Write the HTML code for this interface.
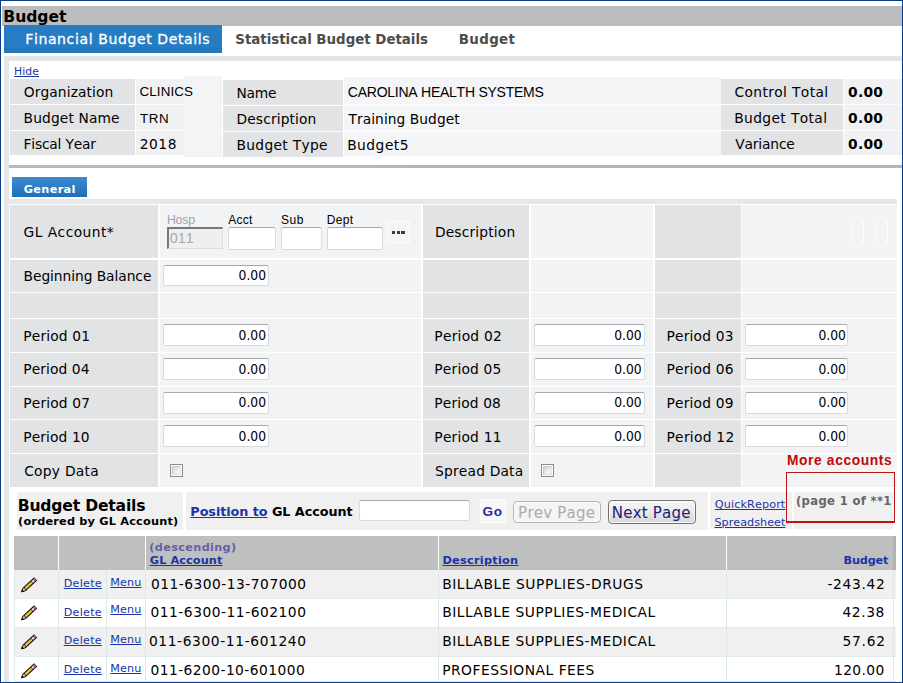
<!DOCTYPE html>
<html><head><meta charset="utf-8"><title>Budget</title>
<style>
html,body{margin:0;padding:0;}
body{width:903px;height:683px;position:relative;overflow:hidden;background:#fff;font-family:"DejaVu Sans","Liberation Sans",sans-serif;font-size:13.8px;color:#000;font-kerning:none;}
.a{position:absolute;}
.t{position:absolute;white-space:nowrap;line-height:1;}
.ar{font-family:"Liberation Sans",sans-serif;}
.b{font-weight:bold;}
a{color:#1a35a8;text-decoration:underline;}
.inp{position:absolute;background:#fff;border:1px solid #d9dadd;border-top-color:#a4a7ab;border-radius:2.5px;box-sizing:border-box;}
.n{font-family:"DejaVu Sans Condensed","DejaVu Sans",sans-serif;font-size:13.7px;}
</style></head><body>
<div class="a" style="left:0px;top:0px;width:903px;height:1px;background:#0b3c84;"></div>
<div class="a" style="left:0px;top:0px;width:1px;height:683px;background:#0b3c84;"></div>
<div class="a" style="left:901.5px;top:0px;width:1.5px;height:683px;background:#0b3c84;"></div>
<div class="a" style="left:0px;top:681.5px;width:903px;height:1.5px;background:#0b3c84;"></div>
<div class="a" style="left:2px;top:6px;width:900px;height:19.6px;background:#bcbdbe;"></div>
<div class="t b" id="t1" style="left:3.3px;top:10px;letter-spacing:-0.05px;font-size:15.6px;color:#000">Budget</div>
<div class="a" style="left:4px;top:25px;width:218px;height:27.6px;background:linear-gradient(#277dc3 0,#277dc3 78%,#2377bd 82%,#2377bd 100%);"></div>
<div class="t " id="t2" style="left:25.26px;top:32px;letter-spacing:0.618px;font-size:14px;color:#fff;-webkit-text-stroke:0.3px #fff">Financial Budget Details</div>
<div class="t b" id="t3" style="left:235.29px;top:33px;letter-spacing:-0.016px;font-size:13.4px;color:#4c4c4c">Statistical Budget Details</div>
<div class="t b" id="t4" style="left:458.67px;top:33px;letter-spacing:0.384px;font-size:13.4px;color:#4c4c4c">Budget</div>
<div class="a" style="left:4px;top:55.8px;width:897.8px;height:5px;background:#e3e5e6;"></div>
<div class="a" style="left:4.2px;top:55.8px;width:4.7px;height:626px;background:#e4e6e8;"></div>
<a class="t " id="t5" style="left:14px;top:67px;letter-spacing:0.1px;font-size:10.8px">Hide</a>
<div class="a" style="left:136px;top:79px;width:48px;height:76px;background:#f0f1f3;"></div>
<div class="a" style="left:183.5px;top:76px;width:38.7px;height:80.5px;background:#f3f4f5;"></div>
<div class="a" style="left:344px;top:77.3px;width:377px;height:78.7px;background:#f4f5f7;"></div>
<div class="a" style="left:843.8px;top:79px;width:58px;height:76px;background:#f1f1f3;"></div>
<div class="a" style="left:10px;top:79px;width:124.7px;height:24.5px;background:#e1e3e5;"></div>
<div class="t " id="t6" style="left:23.7px;top:86px;letter-spacing:0.104px;">Organization</div>
<div class="t ar" id="t7" style="left:139.48px;top:85px;letter-spacing:0.113px;font-size:13.4px">CLINICS</div>
<div class="a" style="left:10px;top:105.2px;width:124.7px;height:24.4px;background:#e1e3e5;"></div>
<div class="t " id="t8" style="left:23.55px;top:112px;letter-spacing:0.127px;">Budget Name</div>
<div class="t ar" id="t9" style="left:139.91px;top:112px;letter-spacing:0.56px;font-size:13.4px">TRN</div>
<div class="a" style="left:135px;top:103.7px;width:48.5px;height:1.5px;background:#fdfdfd;"></div>
<div class="a" style="left:10px;top:131.2px;width:124.7px;height:23.7px;background:#e1e3e5;"></div>
<div class="t " id="t10" style="left:23.55px;top:138px;letter-spacing:-0.186px;">Fiscal Year</div>
<div class="t " id="t11" style="left:139.8px;top:138px;letter-spacing:0.502px;">2018</div>
<div class="a" style="left:135px;top:129.7px;width:48.5px;height:1.5px;background:#fdfdfd;"></div>
<div class="a" style="left:223px;top:80px;width:119.9px;height:24.5px;background:#e1e3e5;"></div>
<div class="t " id="t12" style="left:236.53px;top:87px;letter-spacing:-0.267px;">Name</div>
<div class="t ar" id="t13" style="left:347.85px;top:85px;letter-spacing:-0.251px;font-size:14px">CAROLINA HEALTH SYSTEMS</div>
<div class="a" style="left:223px;top:106.3px;width:119.9px;height:24.5px;background:#e1e3e5;"></div>
<div class="t " id="t14" style="left:236.53px;top:113px;letter-spacing:0.12px;">Description</div>
<div class="t " id="t15" style="left:348.5px;top:113px;letter-spacing:0.05px;">Training Budget</div>
<div class="a" style="left:343px;top:104.3px;width:378px;height:2px;background:#fafafa;"></div>
<div class="a" style="left:223px;top:132.3px;width:119.9px;height:24.5px;background:#e1e3e5;"></div>
<div class="t " id="t16" style="left:236.53px;top:139px;letter-spacing:0.32px;">Budget Type</div>
<div class="t " id="t17" style="left:347.15px;top:139px;letter-spacing:0.504px;">Budget5</div>
<div class="a" style="left:343px;top:130.3px;width:378px;height:2px;background:#fafafa;"></div>
<div class="a" style="left:721px;top:79px;width:121.7px;height:24.5px;background:#e1e3e5;"></div>
<div class="t " id="t18" style="left:734.48px;top:86px;letter-spacing:0.377px;">Control Total</div>
<div class="t b" id="t19" style="left:848.05px;top:86px;letter-spacing:0.275px;color:#000">0.00</div>
<div class="a" style="left:721px;top:105.2px;width:121.7px;height:24.4px;background:#e1e3e5;"></div>
<div class="t " id="t20" style="left:734.26px;top:112px;letter-spacing:0.378px;">Budget Total</div>
<div class="t b" id="t21" style="left:848.05px;top:112px;letter-spacing:0.275px;color:#000">0.00</div>
<div class="a" style="left:843px;top:103.7px;width:58px;height:1.5px;background:#fbfbfb;"></div>
<div class="a" style="left:721px;top:131.2px;width:121.7px;height:23.7px;background:#e1e3e5;"></div>
<div class="t " id="t22" style="left:735.2px;top:138px;letter-spacing:-0.149px;">Variance</div>
<div class="t b" id="t23" style="left:848.05px;top:138px;letter-spacing:0.275px;color:#000">0.00</div>
<div class="a" style="left:843px;top:129.7px;width:58px;height:1.5px;background:#fbfbfb;"></div>
<div class="a" style="left:9px;top:165px;width:893px;height:2.9px;background:linear-gradient(90deg,#b3bdbd,#b6b6b6 60%);"></div>
<div class="a" style="left:12.2px;top:177.3px;width:74.8px;height:19.3px;background:linear-gradient(#3a8bd0,#1f70b9);"></div>
<div class="t b" id="t24" style="left:23.65px;top:184px;letter-spacing:0.347px;font-size:11.3px;color:#fff">General</div>
<div class="a" style="left:9px;top:198.8px;width:888px;height:5.6px;background:#e5e7e8;"></div>
<div class="a" style="left:10px;top:204.7px;width:147.7px;height:53.2px;background:#e1e3e5;"></div>
<div class="a" style="left:159.6px;top:204.7px;width:261.2px;height:53.2px;background:#f2f3f5;"></div>
<div class="a" style="left:422.8px;top:204.7px;width:106.1px;height:53.2px;background:#e1e3e5;"></div>
<div class="a" style="left:530.7px;top:204.7px;width:122.4px;height:53.2px;background:#f2f3f5;"></div>
<div class="a" style="left:654.7px;top:204.7px;width:86.4px;height:53.2px;background:#e1e3e5;"></div>
<div class="a" style="left:742px;top:204.7px;width:155px;height:53.2px;background:#f2f3f5;"></div>
<div class="a" style="left:10px;top:259.8px;width:147.7px;height:31.8px;background:#e1e3e5;"></div>
<div class="a" style="left:159.6px;top:259.8px;width:261.2px;height:31.8px;background:#f2f3f5;"></div>
<div class="a" style="left:422.8px;top:259.8px;width:106.1px;height:31.8px;background:#e1e3e5;"></div>
<div class="a" style="left:530.7px;top:259.8px;width:122.4px;height:31.8px;background:#f2f3f5;"></div>
<div class="a" style="left:654.7px;top:259.8px;width:86.4px;height:31.8px;background:#e1e3e5;"></div>
<div class="a" style="left:742px;top:259.8px;width:155px;height:31.8px;background:#f2f3f5;"></div>
<div class="a" style="left:10px;top:293px;width:147.7px;height:24.8px;background:#e1e3e5;"></div>
<div class="a" style="left:159.6px;top:293px;width:261.2px;height:24.8px;background:#f2f3f5;"></div>
<div class="a" style="left:422.8px;top:293px;width:106.1px;height:24.8px;background:#e1e3e5;"></div>
<div class="a" style="left:530.7px;top:293px;width:122.4px;height:24.8px;background:#f2f3f5;"></div>
<div class="a" style="left:654.7px;top:293px;width:86.4px;height:24.8px;background:#e1e3e5;"></div>
<div class="a" style="left:742px;top:293px;width:155px;height:24.8px;background:#f2f3f5;"></div>
<div class="a" style="left:10px;top:319.2px;width:147.7px;height:32.4px;background:#e1e3e5;"></div>
<div class="a" style="left:159.6px;top:319.2px;width:261.2px;height:32.4px;background:#f2f3f5;"></div>
<div class="a" style="left:422.8px;top:319.2px;width:106.1px;height:32.4px;background:#e1e3e5;"></div>
<div class="a" style="left:530.7px;top:319.2px;width:122.4px;height:32.4px;background:#f2f3f5;"></div>
<div class="a" style="left:654.7px;top:319.2px;width:86.4px;height:32.4px;background:#e1e3e5;"></div>
<div class="a" style="left:742px;top:319.2px;width:155px;height:32.4px;background:#f2f3f5;"></div>
<div class="a" style="left:10px;top:353px;width:147.7px;height:32.6px;background:#e1e3e5;"></div>
<div class="a" style="left:159.6px;top:353px;width:261.2px;height:32.6px;background:#f2f3f5;"></div>
<div class="a" style="left:422.8px;top:353px;width:106.1px;height:32.6px;background:#e1e3e5;"></div>
<div class="a" style="left:530.7px;top:353px;width:122.4px;height:32.6px;background:#f2f3f5;"></div>
<div class="a" style="left:654.7px;top:353px;width:86.4px;height:32.6px;background:#e1e3e5;"></div>
<div class="a" style="left:742px;top:353px;width:155px;height:32.6px;background:#f2f3f5;"></div>
<div class="a" style="left:10px;top:387px;width:147.7px;height:31.8px;background:#e1e3e5;"></div>
<div class="a" style="left:159.6px;top:387px;width:261.2px;height:31.8px;background:#f2f3f5;"></div>
<div class="a" style="left:422.8px;top:387px;width:106.1px;height:31.8px;background:#e1e3e5;"></div>
<div class="a" style="left:530.7px;top:387px;width:122.4px;height:31.8px;background:#f2f3f5;"></div>
<div class="a" style="left:654.7px;top:387px;width:86.4px;height:31.8px;background:#e1e3e5;"></div>
<div class="a" style="left:742px;top:387px;width:155px;height:31.8px;background:#f2f3f5;"></div>
<div class="a" style="left:10px;top:420.1px;width:147.7px;height:32.7px;background:#e1e3e5;"></div>
<div class="a" style="left:159.6px;top:420.1px;width:261.2px;height:32.7px;background:#f2f3f5;"></div>
<div class="a" style="left:422.8px;top:420.1px;width:106.1px;height:32.7px;background:#e1e3e5;"></div>
<div class="a" style="left:530.7px;top:420.1px;width:122.4px;height:32.7px;background:#f2f3f5;"></div>
<div class="a" style="left:654.7px;top:420.1px;width:86.4px;height:32.7px;background:#e1e3e5;"></div>
<div class="a" style="left:742px;top:420.1px;width:155px;height:32.7px;background:#f2f3f5;"></div>
<div class="a" style="left:10px;top:454px;width:147.7px;height:32.6px;background:#e1e3e5;"></div>
<div class="a" style="left:159.6px;top:454px;width:261.2px;height:32.6px;background:#f2f3f5;"></div>
<div class="a" style="left:422.8px;top:454px;width:106.1px;height:32.6px;background:#e1e3e5;"></div>
<div class="a" style="left:530.7px;top:454px;width:122.4px;height:32.6px;background:#f2f3f5;"></div>
<div class="a" style="left:654.7px;top:454px;width:86.4px;height:32.6px;background:#e1e3e5;"></div>
<div class="a" style="left:742px;top:454px;width:155px;height:32.6px;background:#f2f3f5;"></div>
<div class="t " id="t25" style="left:23.61px;top:226px;letter-spacing:0.45px;">GL Account*</div>
<div class="t " id="t26" style="left:434.88px;top:226px;letter-spacing:0.169px;">Description</div>
<div class="t ar" id="t27" style="left:166.91px;top:214px;letter-spacing:-0.173px;font-size:12.3px;color:#a89fb2">Hosp</div>
<div class="t ar" id="t28" style="left:228.3px;top:214px;letter-spacing:0.216px;font-size:12px;color:#000">Acct</div>
<div class="t ar" id="t29" style="left:281.01px;top:214px;letter-spacing:0.584px;font-size:12px;color:#000">Sub</div>
<div class="t ar" id="t30" style="left:326.85px;top:214px;letter-spacing:0.264px;font-size:12px;color:#000">Dept</div>
<div class="a" style="left:167px;top:227px;width:55.5px;height:22.3px;background:#eef0f0;border:2px solid #787878;border-right:1px solid #dcdcdc;border-bottom:1px solid #dcdcdc;box-sizing:border-box"></div>
<div class="t ar" id="t31" style="left:169.8px;top:231px;font-size:14.3px;color:#a8a8a8">011</div>
<div class="inp" style="left:228px;top:227px;width:47.7px;height:22.6px"></div>
<div class="inp" style="left:281.2px;top:227px;width:40.8px;height:22.6px"></div>
<div class="inp" style="left:327px;top:227px;width:55.8px;height:22.6px"></div>
<div class="a" style="left:387px;top:221px;width:23px;height:21.6px;background:#f5f5f5;border:1px solid #fcfcfc;box-sizing:border-box"></div>
<div class="a" style="left:391.6px;top:230.7px;width:3.9px;height:3.2px;background:#3a3a3a;"></div>
<div class="a" style="left:396.5px;top:230.7px;width:3.9px;height:3.2px;background:#3a3a3a;"></div>
<div class="a" style="left:401.40000000000003px;top:230.7px;width:3.9px;height:3.2px;background:#3a3a3a;"></div>
<div class="a" style="left:848.5px;top:220.5px;width:3px;height:22px;box-sizing:border-box;border:1px solid rgba(255,255,255,.8);border-left:none"></div>
<div class="a" style="left:860.8px;top:220.5px;width:3px;height:22px;box-sizing:border-box;border:1px solid rgba(255,255,255,.8);border-left:none"></div>
<div class="a" style="left:873.1px;top:220.5px;width:3px;height:22px;box-sizing:border-box;border:1px solid rgba(255,255,255,.8);border-left:none"></div>
<div class="a" style="left:885.4px;top:220.5px;width:3px;height:22px;box-sizing:border-box;border:1px solid rgba(255,255,255,.8);border-left:none"></div>
<div class="t " id="t32" style="left:23.56px;top:270px;letter-spacing:-0.06px;">Beginning Balance</div>
<div class="inp" style="left:163.2px;top:265px;width:105.6px;height:21.4px"></div>
<div class="t n" id="t33" style="right:637px;top:269px;">0.00</div>
<div class="t " id="t34" style="left:23.37px;top:330px;letter-spacing:0.146px;">Period 01</div>
<div class="t " id="t35" style="left:434.37px;top:330px;letter-spacing:0.238px;">Period 02</div>
<div class="t " id="t36" style="left:666.53px;top:330px;letter-spacing:0.19px;">Period 03</div>
<div class="inp" style="left:163.2px;top:324px;width:105.6px;height:22px"></div>
<div class="t n" id="t37" style="right:637px;top:329px;">0.00</div>
<div class="inp" style="left:534.3px;top:324px;width:110.5px;height:22px"></div>
<div class="t n" id="t38" style="right:261.3px;top:329px;">0.00</div>
<div class="inp" style="left:745.3px;top:324px;width:102.7px;height:22px"></div>
<div class="t n" id="t39" style="right:57.1px;top:329px;">0.00</div>
<div class="t " id="t40" style="left:23.37px;top:363px;letter-spacing:0.087px;">Period 04</div>
<div class="t " id="t41" style="left:434.37px;top:363px;letter-spacing:0.195px;">Period 05</div>
<div class="t " id="t42" style="left:666.53px;top:363px;letter-spacing:0.19px;">Period 06</div>
<div class="inp" style="left:163.2px;top:358px;width:105.6px;height:22px"></div>
<div class="t n" id="t43" style="right:637px;top:363px;">0.00</div>
<div class="inp" style="left:534.3px;top:358px;width:110.5px;height:22px"></div>
<div class="t n" id="t44" style="right:261.3px;top:363px;">0.00</div>
<div class="inp" style="left:745.3px;top:358px;width:102.7px;height:22px"></div>
<div class="t n" id="t45" style="right:57.1px;top:363px;">0.00</div>
<div class="t " id="t46" style="left:23.37px;top:397px;letter-spacing:0.139px;">Period 07</div>
<div class="t " id="t47" style="left:434.37px;top:397px;letter-spacing:0.129px;">Period 08</div>
<div class="t " id="t48" style="left:666.53px;top:397px;letter-spacing:0.19px;">Period 09</div>
<div class="inp" style="left:163.2px;top:392px;width:105.6px;height:22px"></div>
<div class="t n" id="t49" style="right:637px;top:396px;">0.00</div>
<div class="inp" style="left:534.3px;top:392px;width:110.5px;height:22px"></div>
<div class="t n" id="t50" style="right:261.3px;top:396px;">0.00</div>
<div class="inp" style="left:745.3px;top:392px;width:102.7px;height:22px"></div>
<div class="t n" id="t51" style="right:57.1px;top:396px;">0.00</div>
<div class="t " id="t52" style="left:23.37px;top:431px;letter-spacing:0.094px;">Period 10</div>
<div class="t " id="t53" style="left:434.37px;top:431px;letter-spacing:0.202px;">Period 11</div>
<div class="t " id="t54" style="left:666.53px;top:431px;letter-spacing:0.28px;">Period 12</div>
<div class="inp" style="left:163.2px;top:425px;width:105.6px;height:22px"></div>
<div class="t n" id="t55" style="right:637px;top:430px;">0.00</div>
<div class="inp" style="left:534.3px;top:425px;width:110.5px;height:22px"></div>
<div class="t n" id="t56" style="right:261.3px;top:430px;">0.00</div>
<div class="inp" style="left:745.3px;top:425px;width:102.7px;height:22px"></div>
<div class="t n" id="t57" style="right:57.1px;top:430px;">0.00</div>
<div class="t " id="t58" style="left:24.19px;top:465px;letter-spacing:0.28px;">Copy Data</div>
<div class="t " id="t59" style="left:435.08px;top:465px;letter-spacing:0.186px;">Spread Data</div>
<div class="a" style="left:170.1px;top:464.1px;width:12.8px;height:12.8px;box-sizing:border-box;border:1.1px solid #8a8a8a;background:#fdfdfd"><div style="position:absolute;left:1px;top:1px;right:1px;bottom:1px;box-sizing:border-box;border:1px solid #c3c7ce;border-right-color:#dfe1e4;border-bottom-color:#dfe1e4;background:linear-gradient(135deg,#cfd3da,#f5f5f5 75%)"></div></div>
<div class="a" style="left:541.2px;top:464.1px;width:12.8px;height:12.8px;box-sizing:border-box;border:1.1px solid #8a8a8a;background:#fdfdfd"><div style="position:absolute;left:1px;top:1px;right:1px;bottom:1px;box-sizing:border-box;border:1px solid #c3c7ce;border-right-color:#dfe1e4;border-bottom-color:#dfe1e4;background:linear-gradient(135deg,#cfd3da,#f5f5f5 75%)"></div></div>
<div class="t ar b" id="t60" style="left:786.97px;top:454px;letter-spacing:0.615px;font-size:13.8px;color:#c00a0a">More accounts</div>
<div class="a" style="left:16.6px;top:491.8px;width:166.2px;height:38px;background:#f0f0f0;"></div>
<div class="t b" id="t61" style="left:17.72px;top:499px;letter-spacing:-0.185px;font-size:15.6px;color:#000">Budget Details</div>
<div class="t b" id="t62" style="left:18.06px;top:516px;letter-spacing:0.195px;font-size:11.3px;color:#000">(ordered by GL Account)</div>
<div class="a" style="left:186px;top:491.8px;width:521.5px;height:38px;background:#f0f0f0;"></div>
<div class="t b" id="t63" style="left:190.34px;top:506px;letter-spacing:-0.069px;font-size:12.8px;color:#000"><a>Position to</a> GL Account</div>
<div class="inp" style="left:358.5px;top:500px;width:111.2px;height:21px"></div>
<div class="a" style="left:480.2px;top:499px;width:25.8px;height:24.4px;background:#f7f7f7;border:1px solid #fdfdfd;box-sizing:border-box"></div>
<div class="t b ar" id="t64" style="left:482.6px;top:505px;letter-spacing:0.496px;font-size:13.6px;color:#2a2a9c">Go</div>
<div class="a" style="left:513px;top:501.2px;width:87.7px;height:22.2px;box-sizing:border-box;border:1px solid #b4b4b4;border-radius:4px;background:#f4f4f4;box-shadow:inset 0 0 0 1px #fcfcfc"></div>
<div class="t " id="t65" style="left:518.12px;top:506px;letter-spacing:0.23px;font-size:15px;color:#ababab">Prev Page</div>
<div class="a" style="left:607.9px;top:500.4px;width:87.7px;height:23.6px;box-sizing:border-box;border:1px solid #707070;border-radius:4px;background:linear-gradient(#f6f6f6,#e9e9e9 50%,#d6d6d6);box-shadow:inset 0 0 0 1px #fbfbfb"></div>
<div class="t " id="t66" style="left:611.8px;top:506px;letter-spacing:0.2px;font-size:15px;color:#20207c">Next Page</div>
<div class="a" style="left:710px;top:492.2px;width:81.7px;height:37.2px;background:#f0f0f0;"></div>
<a class="t " id="t67" style="left:714.85px;top:499px;letter-spacing:0.117px;font-size:11.2px">QuickReport</a>
<a class="t " id="t68" style="left:714.52px;top:517px;letter-spacing:0.007px;font-size:11.2px">Spreadsheet</a>
<div class="a" style="left:794px;top:492.2px;width:99px;height:37.2px;background:#f0f0f0;"></div>
<div class="t b" id="t69" style="left:795.91px;top:496px;letter-spacing:0.351px;font-size:11.6px;color:#666">(page 1 of **1</div>
<div class="a" style="left:786px;top:472px;width:109px;height:1.4px;background:#c01414;"></div>
<div class="a" style="left:786px;top:521.4px;width:109px;height:1.4px;background:#c01414;"></div>
<div class="a" style="left:786px;top:472px;width:1.4px;height:50.8px;background:#c01414;"></div>
<div class="a" style="left:893.6px;top:472px;width:1.4px;height:50.8px;background:#c01414;"></div>
<div class="a" style="left:14.2px;top:535.8px;width:43.8px;height:33.9px;background:#bebfbf;"></div>
<div class="a" style="left:59.2px;top:535.8px;width:47.5px;height:33.9px;background:#bebfbf;"></div>
<div class="a" style="left:107.2px;top:535.8px;width:37.9px;height:33.9px;background:#bebfbf;"></div>
<div class="a" style="left:146.3px;top:535.8px;width:291.5px;height:33.9px;background:#bebfbf;"></div>
<div class="a" style="left:439.4px;top:535.8px;width:286.6px;height:33.9px;background:#bebfbf;"></div>
<div class="a" style="left:727px;top:535.8px;width:166px;height:33.9px;background:#bebfbf;"></div>
<div class="a" style="left:893px;top:535.8px;width:3px;height:33.9px;background:#b2b2b2;"></div>
<div class="t b" id="t70" style="left:149.37px;top:542px;letter-spacing:0.319px;font-size:11.3px;color:#675fa8">(descending)</div>
<a class="t b" id="t71" style="left:149.82px;top:555px;letter-spacing:0.084px;font-size:11.3px">GL Account</a>
<a class="t b" id="t72" style="left:442.49px;top:555px;letter-spacing:0.259px;font-size:11.3px">Description</a>
<div class="t b" id="t73" style="left:843.53px;top:555px;letter-spacing:-0.186px;font-size:11.3px;color:#1a35a8">Budget</div>
<div class="a" style="left:14.2px;top:569.6px;width:881.8px;height:29.1px;background:#f0f0f0;"></div>
<div class="a" style="left:14.2px;top:569.6px;width:1.2px;height:29.1px;background:#dbe8ea;"></div>
<div class="a" style="left:58.2px;top:569.6px;width:1.2px;height:29.1px;background:#dbe8ea;"></div>
<div class="a" style="left:105.8px;top:569.6px;width:1.2px;height:29.1px;background:#dbe8ea;"></div>
<div class="a" style="left:144.8px;top:569.6px;width:1.2px;height:29.1px;background:#dbe8ea;"></div>
<div class="a" style="left:438px;top:569.6px;width:1.2px;height:29.1px;background:#dbe8ea;"></div>
<div class="a" style="left:726px;top:569.6px;width:1.2px;height:29.1px;background:#dbe8ea;"></div>
<div class="a" style="left:893px;top:569.6px;width:1.2px;height:29.1px;background:#dbe8ea;"></div>
<div class="a" style="left:14.2px;top:597.7px;width:881.8px;height:1.2px;background:#e3ebed;"></div>
<svg class="a" style="left:18px;top:576.9px" width="22" height="20" viewBox="0 0 22 20"><g transform="translate(3.1,15.3) rotate(-42.7)"><path d="M0 0 L3.2 -2 L5.4 -2.35 L19.8 -2.35 L19.8 2.35 L5.4 2.35 L3.2 2 Z" fill="#2a120a"/><path d="M5.8 -1.1 L14.4 -1.1 L14.4 1.1 L5.8 1.1 Z" fill="#dcd23e"/><path d="M15 -1.2 L17.6 -1.2 L17.6 1.2 L15 1.2 Z" fill="#f0d0c0"/><path d="M17.9 -1.3 L19.2 -1.3 L19.2 1.3 L17.9 1.3 Z" fill="#a89a96"/><path d="M2.8 -0.8 L5.0 -1.2 L5.0 1.2 L2.8 0.8 Z" fill="#f6e0cc"/><path d="M0 0 L2.8 -1.5 L2.8 1.5 Z" fill="#0c0c0c"/></g></svg>
<a class="t " id="t74" style="left:63.7px;top:578px;letter-spacing:0.238px;font-size:11.2px">Delete</a>
<a class="t " id="t75" style="left:110.29px;top:577px;letter-spacing:0.115px;font-size:11.2px">Menu</a>
<div class="t " id="t76" style="left:150.91px;top:578px;letter-spacing:0.499px;">011-6300-13-707000</div>
<div class="t " id="t77" style="left:442.16px;top:578px;letter-spacing:0.583px;">BILLABLE SUPPLIES-DRUGS</div>
<div class="t " id="t78" style="left:827.48px;top:578px;letter-spacing:0.668px;">-243.42</div>
<div class="a" style="left:14.2px;top:598.7px;width:881.8px;height:28.9px;background:#ffffff;"></div>
<div class="a" style="left:14.2px;top:598.7px;width:1.2px;height:28.9px;background:#dbe8ea;"></div>
<div class="a" style="left:58.2px;top:598.7px;width:1.2px;height:28.9px;background:#dbe8ea;"></div>
<div class="a" style="left:105.8px;top:598.7px;width:1.2px;height:28.9px;background:#dbe8ea;"></div>
<div class="a" style="left:144.8px;top:598.7px;width:1.2px;height:28.9px;background:#dbe8ea;"></div>
<div class="a" style="left:438px;top:598.7px;width:1.2px;height:28.9px;background:#dbe8ea;"></div>
<div class="a" style="left:726px;top:598.7px;width:1.2px;height:28.9px;background:#dbe8ea;"></div>
<div class="a" style="left:893px;top:598.7px;width:1.2px;height:28.9px;background:#dbe8ea;"></div>
<div class="a" style="left:14.2px;top:626.6px;width:881.8px;height:1.2px;background:#e3ebed;"></div>
<svg class="a" style="left:18px;top:605.0px" width="22" height="20" viewBox="0 0 22 20"><g transform="translate(3.1,15.3) rotate(-42.7)"><path d="M0 0 L3.2 -2 L5.4 -2.35 L19.8 -2.35 L19.8 2.35 L5.4 2.35 L3.2 2 Z" fill="#2a120a"/><path d="M5.8 -1.1 L14.4 -1.1 L14.4 1.1 L5.8 1.1 Z" fill="#dcd23e"/><path d="M15 -1.2 L17.6 -1.2 L17.6 1.2 L15 1.2 Z" fill="#f0d0c0"/><path d="M17.9 -1.3 L19.2 -1.3 L19.2 1.3 L17.9 1.3 Z" fill="#a89a96"/><path d="M2.8 -0.8 L5.0 -1.2 L5.0 1.2 L2.8 0.8 Z" fill="#f6e0cc"/><path d="M0 0 L2.8 -1.5 L2.8 1.5 Z" fill="#0c0c0c"/></g></svg>
<a class="t " id="t79" style="left:63.71px;top:607px;letter-spacing:0.238px;font-size:11.2px">Delete</a>
<a class="t " id="t80" style="left:110.3px;top:604px;letter-spacing:0.112px;font-size:11.2px">Menu</a>
<div class="t " id="t81" style="left:150.48px;top:606px;letter-spacing:0.52px;">011-6300-11-602100</div>
<div class="t " id="t82" style="left:442.16px;top:606px;letter-spacing:0.53px;">BILLABLE SUPPLIES-MEDICAL</div>
<div class="t " id="t83" style="left:842.48px;top:606px;letter-spacing:0.604px;">42.38</div>
<div class="a" style="left:14.2px;top:627.6px;width:881.8px;height:29.0px;background:#f0f0f0;"></div>
<div class="a" style="left:14.2px;top:627.6px;width:1.2px;height:29.0px;background:#dbe8ea;"></div>
<div class="a" style="left:58.2px;top:627.6px;width:1.2px;height:29.0px;background:#dbe8ea;"></div>
<div class="a" style="left:105.8px;top:627.6px;width:1.2px;height:29.0px;background:#dbe8ea;"></div>
<div class="a" style="left:144.8px;top:627.6px;width:1.2px;height:29.0px;background:#dbe8ea;"></div>
<div class="a" style="left:438px;top:627.6px;width:1.2px;height:29.0px;background:#dbe8ea;"></div>
<div class="a" style="left:726px;top:627.6px;width:1.2px;height:29.0px;background:#dbe8ea;"></div>
<div class="a" style="left:893px;top:627.6px;width:1.2px;height:29.0px;background:#dbe8ea;"></div>
<div class="a" style="left:14.2px;top:655.6px;width:881.8px;height:1.2px;background:#e3ebed;"></div>
<svg class="a" style="left:18px;top:634.0px" width="22" height="20" viewBox="0 0 22 20"><g transform="translate(3.1,15.3) rotate(-42.7)"><path d="M0 0 L3.2 -2 L5.4 -2.35 L19.8 -2.35 L19.8 2.35 L5.4 2.35 L3.2 2 Z" fill="#2a120a"/><path d="M5.8 -1.1 L14.4 -1.1 L14.4 1.1 L5.8 1.1 Z" fill="#dcd23e"/><path d="M15 -1.2 L17.6 -1.2 L17.6 1.2 L15 1.2 Z" fill="#f0d0c0"/><path d="M17.9 -1.3 L19.2 -1.3 L19.2 1.3 L17.9 1.3 Z" fill="#a89a96"/><path d="M2.8 -0.8 L5.0 -1.2 L5.0 1.2 L2.8 0.8 Z" fill="#f6e0cc"/><path d="M0 0 L2.8 -1.5 L2.8 1.5 Z" fill="#0c0c0c"/></g></svg>
<a class="t " id="t84" style="left:63.7px;top:635px;letter-spacing:0.238px;font-size:11.2px">Delete</a>
<a class="t " id="t85" style="left:110.29px;top:634px;letter-spacing:0.115px;font-size:11.2px">Menu</a>
<div class="t " id="t86" style="left:148.92px;top:635px;letter-spacing:0.617px;">011-6300-11-601240</div>
<div class="t " id="t87" style="left:442.16px;top:635px;letter-spacing:0.53px;">BILLABLE SUPPLIES-MEDICAL</div>
<div class="t " id="t88" style="left:842.46px;top:635px;letter-spacing:0.77px;">57.62</div>
<div class="a" style="left:14.2px;top:656.6px;width:881.8px;height:25.15px;background:#ffffff;"></div>
<div class="a" style="left:14.2px;top:656.6px;width:1.2px;height:25.15px;background:#dbe8ea;"></div>
<div class="a" style="left:58.2px;top:656.6px;width:1.2px;height:25.15px;background:#dbe8ea;"></div>
<div class="a" style="left:105.8px;top:656.6px;width:1.2px;height:25.15px;background:#dbe8ea;"></div>
<div class="a" style="left:144.8px;top:656.6px;width:1.2px;height:25.15px;background:#dbe8ea;"></div>
<div class="a" style="left:438px;top:656.6px;width:1.2px;height:25.15px;background:#dbe8ea;"></div>
<div class="a" style="left:726px;top:656.6px;width:1.2px;height:25.15px;background:#dbe8ea;"></div>
<div class="a" style="left:893px;top:656.6px;width:1.2px;height:25.15px;background:#dbe8ea;"></div>
<div class="a" style="left:14.2px;top:680.75px;width:881.8px;height:1.2px;background:#e3ebed;"></div>
<svg class="a" style="left:18px;top:662.6px" width="22" height="20" viewBox="0 0 22 20"><g transform="translate(3.1,15.3) rotate(-42.7)"><path d="M0 0 L3.2 -2 L5.4 -2.35 L19.8 -2.35 L19.8 2.35 L5.4 2.35 L3.2 2 Z" fill="#2a120a"/><path d="M5.8 -1.1 L14.4 -1.1 L14.4 1.1 L5.8 1.1 Z" fill="#dcd23e"/><path d="M15 -1.2 L17.6 -1.2 L17.6 1.2 L15 1.2 Z" fill="#f0d0c0"/><path d="M17.9 -1.3 L19.2 -1.3 L19.2 1.3 L17.9 1.3 Z" fill="#a89a96"/><path d="M2.8 -0.8 L5.0 -1.2 L5.0 1.2 L2.8 0.8 Z" fill="#f6e0cc"/><path d="M0 0 L2.8 -1.5 L2.8 1.5 Z" fill="#0c0c0c"/></g></svg>
<a class="t " id="t89" style="left:63.71px;top:664px;letter-spacing:0.238px;font-size:11.2px">Delete</a>
<a class="t " id="t90" style="left:110.3px;top:663px;letter-spacing:0.112px;font-size:11.2px">Menu</a>
<div class="t " id="t91" style="left:150.48px;top:664px;letter-spacing:0.447px;">011-6200-10-601000</div>
<div class="t " id="t92" style="left:442.16px;top:664px;letter-spacing:0.523px;">PROFESSIONAL FEES</div>
<div class="t " id="t93" style="left:833.96px;top:664px;letter-spacing:0.416px;">120.00</div>
<div class="a" style="left:0px;top:681.5px;width:903px;height:1.5px;background:#0b3c84;"></div>
<div class="a" style="left:901.5px;top:0px;width:1.5px;height:683px;background:#0b3c84;"></div>
</body></html>
